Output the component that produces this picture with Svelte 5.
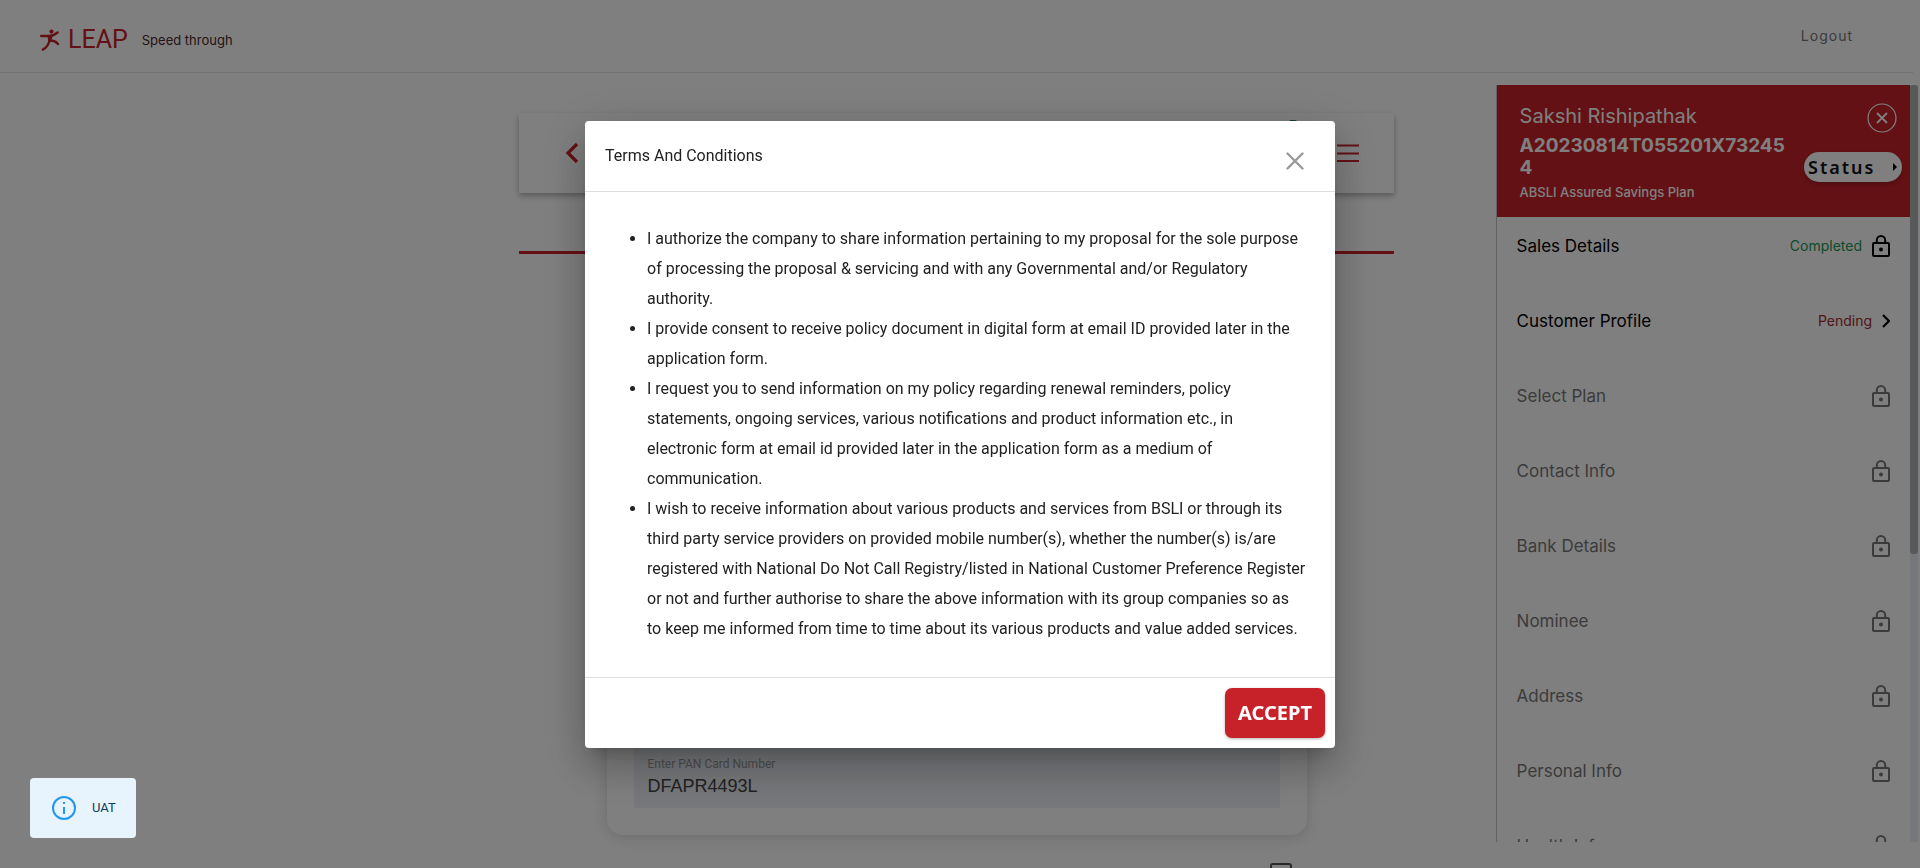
<script>
  const steps = [
    { name: 'Sales Details', status: 'Completed', icon: 'lock' },
    { name: 'Customer Profile', status: 'Pending', icon: 'chevron' },
    { name: 'Select Plan', icon: 'lock', locked: true },
    { name: 'Contact Info', icon: 'lock', locked: true },
    { name: 'Bank Details', icon: 'lock', locked: true },
    { name: 'Nominee', icon: 'lock', locked: true },
    { name: 'Address', icon: 'lock', locked: true },
    { name: 'Personal Info', icon: 'lock', locked: true },
    { name: 'Health Info', icon: 'lock', locked: true }
  ];
  // Each term keeps its own line breaks; the list is set with white-space: pre-line.
  const terms = [
    `I authorize the company to share information pertaining to my proposal for the sole purpose
of processing the proposal & servicing and with any Governmental and/or Regulatory
authority.`,
    `I provide consent to receive policy document in digital form at email ID provided later in the
application form.`,
    `I request you to send information on my policy regarding renewal reminders, policy
statements, ongoing services, various notifications and product information etc., in
electronic form at email id provided later in the application form as a medium of
communication.`,
    `I wish to receive information about various products and services from BSLI or through its
third party service providers on provided mobile number(s), whether the number(s) is/are
registered with National Do Not Call Registry/listed in National Customer Preference Register
or not and further authorise to share the above information with its group companies so as
to keep me informed from time to time about its various products and value added services.`
  ];
  let pan = $state('DFAPR4493L');
</script>

<div class="page">
  <header class="top">
    <div class="brand">
      <svg class="runner" viewBox="0 0 20 22" aria-hidden="true">
        <circle cx="11.5" cy="2.6" r="2.1" fill="#c72229" />
        <path d="M1.2 7h7.6c3 0 5.600-.8 8.800-3.600M11 7.200 9.500 12C8.500 15.500 6.500 18.800 2.800 20.600M9.800 11.500c2.800 0 6.200.8 8.200 3.600" fill="none" stroke="#c72229" stroke-width="2.400" stroke-linecap="round" />
        <path d="M7.500 6.200 13 6l-2.200 6.800H8.200z" fill="#c72229" />
      </svg>
      <span class="logo">LEAP</span>
      <span class="tagline">Speed through</span>
    </div>
    <button class="logout">Logout</button>
  </header>

  <main>
    <div class="toolbar">
      <button class="plain" aria-label="Back">
        <svg width="14" height="22" viewBox="0 0 14 22"><path d="M12 2 3 11l9 9" fill="none" stroke="#c72229" stroke-width="3.200" /></svg>
      </button>
      <div class="tools">
        <span class="dot"></span>
        <button class="plain" aria-label="Menu">
          <svg width="22" height="20" viewBox="0 0 22 20"><path d="M0 2.500h22M0 10.500h22M0 18h22" stroke="#c72229" stroke-width="2" /></svg>
        </button>
      </div>
    </div>
    <div class="rule"></div>
    <section class="card">
      <div class="field">
        <label for="pan">Enter PAN Card Number</label>
        <input id="pan" bind:value={pan} />
      </div>
    </section>
    <div class="consent"><input type="checkbox" aria-label="Consent" /></div>
  </main>

  <aside>
    <div class="panel">
      <div class="customer">
        <div class="who">
          <h2>Sakshi Rishipathak</h2>
          <strong>A20230814T055201X732454</strong>
          <p>ABSLI Assured Savings Plan</p>
        </div>
        <div class="actions">
          <button class="plain" aria-label="Close panel">
            <svg width="30" height="30" viewBox="0 0 30 30" fill="none" stroke="#fff"><circle cx="15" cy="15" r="14" stroke-width="1.200" /><path d="m10 10 10 10m0-10L10 20" stroke-width="1.800" /></svg>
          </button>
          <button class="status">Status<svg width="4" height="8" viewBox="0 0 4 8"><path d="M0 0l4 4-4 4z" /></svg></button>
        </div>
      </div>
      <ul class="steps">
        {#each steps as step}
          <li>
            <button class="step" class:locked={step.locked}>
              <span class="name">{step.name}</span>
              {#if step.status}<span class="state" class:done={step.status === 'Completed'}>{step.status}</span>{/if}
              {#if step.icon === 'lock'}
                <svg width="18" height="22" viewBox="0 0 18 22" fill="none" stroke="currentColor" stroke-width="2"><rect x="1" y="8" width="16" height="13" rx="1" /><path d="M4.800 8V5.200a4.200 4.200 0 0 1 8.400 0V8" /><circle cx="9" cy="14.500" r="2" fill="currentColor" stroke="none" /></svg>
              {:else}
                <svg width="8" height="14" viewBox="0 0 8 14" fill="none" stroke="currentColor" stroke-width="2.200"><path d="m1 1 6 6-6 6" /></svg>
              {/if}
            </button>
          </li>
        {/each}
      </ul>
    </div>
    <div class="track"><div class="thumb"></div></div>
  </aside>
</div>

<div class="backdrop">
  <div class="dialog" role="dialog" aria-modal="true" aria-labelledby="terms-title">
    <div class="dialog-head">
      <h1 id="terms-title">Terms And Conditions</h1>
      <button class="plain" aria-label="Close">
        <svg width="18" height="18" viewBox="0 0 18 18"><path d="m1.500 1.500 15 15m0-15-15 15" stroke="#999" stroke-width="2.400" stroke-linecap="round" /></svg>
      </button>
    </div>
    <div class="dialog-body">
      <ul>
        {#each terms as term}<li>{term}</li>{/each}
      </ul>
    </div>
    <div class="dialog-foot"><button class="accept">ACCEPT</button></div>
  </div>
</div>

<div class="notice" role="status">
  <svg width="24" height="24" viewBox="0 0 24 24" fill="none" stroke="#2196f3" stroke-width="2"><circle cx="12" cy="12" r="11" /><path d="M12 11v7M12 6v2" /></svg>
  <span>UAT</span>
</div>

<style>
  :global(body) { margin: 0; background: #fff; overflow: hidden; }
  .page, .backdrop, .notice { box-sizing: border-box; font-family: Roboto, "Liberation Sans", sans-serif; }
  .page { height: 100vh; overflow: hidden; padding-right: 7px; color: #000; }
  button { font-family: inherit; border: 0; cursor: pointer; }
  .plain { background: none; padding: 0; display: flex; }
  h1, h2, p, ul { margin: 0; }

  .top { display: flex; justify-content: space-between; align-items: center; height: 72px; padding: 0 60px 0 40px; border-bottom: 1px solid #dedede; }
  .brand { display: flex; align-items: center; padding-top: 8px; }
  .runner { width: 20px; height: 22px; }
  .logo { margin: 0 14px 0 8px; font: 25px/32px Roboto, sans-serif; color: #c72229; }
  .tagline { font: 13px/20px Inter, sans-serif; color: #4a2a2c; }
  .logout { background: none; padding: 0; font: 14px/20px Inter, sans-serif; letter-spacing: 1px; color: #777; }

  main { display: flex; flex-direction: column; align-items: center; padding-top: 40px; }
  .toolbar { display: flex; justify-content: space-between; align-items: center; box-sizing: border-box; width: 875px; height: 80px; padding: 0 35px 0 46px; box-shadow: 0 3px 6px rgba(0, 0, 0, .3); }
  .tools { position: relative; display: flex; }
  .dot { position: absolute; right: 62px; top: -23px; width: 8px; height: 8px; border-radius: 2px; background: #1a8a52; }
  .rule { width: 875px; height: 3px; margin-top: 58px; background: #c72229; }
  .card { box-sizing: border-box; width: 700px; height: 541px; margin-top: 40px; padding: 27px; border-radius: 16px; box-shadow: 0 2px 16px rgba(0, 0, 0, .16); display: flex; align-items: flex-end; }
  .field { flex: 1; display: flex; flex-direction: column; padding: 20px 14px 8px; background: #edf1f7; }
  .field label { font: 12px/16px Roboto, sans-serif; color: #999; }
  .field input { border: 0; padding: 0; height: 28px; outline: 0; background: none; font: 18px/28px "Liberation Sans", sans-serif; color: #444; }
  .consent { box-sizing: border-box; width: 700px; padding: 28px 15px 0; display: flex; justify-content: flex-end; }
  .consent input { appearance: none; box-sizing: border-box; width: 22px; height: 22px; margin: 0; border: 2px solid #555; border-radius: 3px; }

  aside { position: fixed; top: 85px; right: 2px; bottom: 26px; width: 22%; min-width: 360px; display: flex; overflow: hidden; font-family: Inter, sans-serif; background: #fff; }
  .panel { flex: 1; overflow: hidden; border-left: 1px solid #c4c4c4; }
  .customer { display: flex; justify-content: space-between; box-sizing: border-box; height: 132px; padding: 18px 8px 12px 23px; background: #c72229; color: #fff; }
  .who { width: 268px; }
  h2 { font-size: 20px; line-height: 27px; font-weight: 400; }
  .who strong { display: block; margin-top: 5px; font-size: 19px; line-height: 22px; font-weight: 700; overflow-wrap: anywhere; }
  .who p { margin-top: 4px; font-size: 13px; line-height: 18px; font-weight: 500; }
  .actions { display: flex; flex-direction: column; align-items: flex-end; gap: 19px; }
  .actions .plain { margin-right: 5px; }
  .status { display: flex; align-items: center; justify-content: space-between; width: 98px; height: 30px; padding: 0 5px 0 4px; border-radius: 15px; background: #fff; box-shadow: 0 2px 4px rgba(0, 0, 0, .25); font: 600 18px/24px "Noto Sans", sans-serif; letter-spacing: 2px; color: #111; }
  .steps { list-style: none; padding: 0; }
  .step { display: flex; align-items: center; width: 100%; height: 75px; padding: 0 20px 17px; background: none; color: #000; text-align: left; }
  .name { flex: 1; font-size: 17px; line-height: 24px; }
  .state { margin-right: 10px; font-size: 14px; line-height: 20px; color: #a02c30; }
  .done { color: #219653; }
  .locked { color: #777; }
  .track { width: 8px; background: #edeff4; }
  .thumb { height: 62%; border-radius: 3px; background: #aeb0b4; }

  .backdrop { position: fixed; inset: 0; display: flex; align-items: center; justify-content: center; background: rgba(0, 0, 0, .5); }
  .dialog { width: 750px; border-radius: 4px; background: #fff; color: #212121; box-shadow: 0 11px 15px -7px rgba(0, 0, 0, .2), 0 24px 38px 3px rgba(0, 0, 0, .14), 0 9px 46px 8px rgba(0, 0, 0, .12); }
  .dialog-head { display: flex; justify-content: space-between; align-items: center; height: 70px; padding: 0 31px 0 20px; }
  .dialog-head .plain { padding-top: 10px; }
  h1 { font-size: 16px; line-height: 24px; font-weight: 400; }
  .dialog-body { padding: 32px 14px 33px 22px; border-top: 1px solid #dedede; border-bottom: 1px solid #dedede; }
  .dialog-body ul { padding-left: 40px; font-size: 16px; line-height: 30px; white-space: pre-line; }
  .dialog-foot { display: flex; justify-content: flex-end; padding: 10px; }
  .accept { width: 100px; height: 50px; padding: 0; border-radius: 7px; background: #c72229; box-shadow: 0 1px 3px rgba(0, 0, 0, .3); font: 700 20px/24px "Noto Sans", sans-serif; color: #fff; }

  .notice { position: fixed; left: 30px; bottom: 30px; display: flex; align-items: center; gap: 16px; height: 60px; padding: 0 20px 0 22px; border-radius: 4px; background: #e7f4fe; font: 13px/20px Roboto, sans-serif; color: #0d3c61; }
</style>
